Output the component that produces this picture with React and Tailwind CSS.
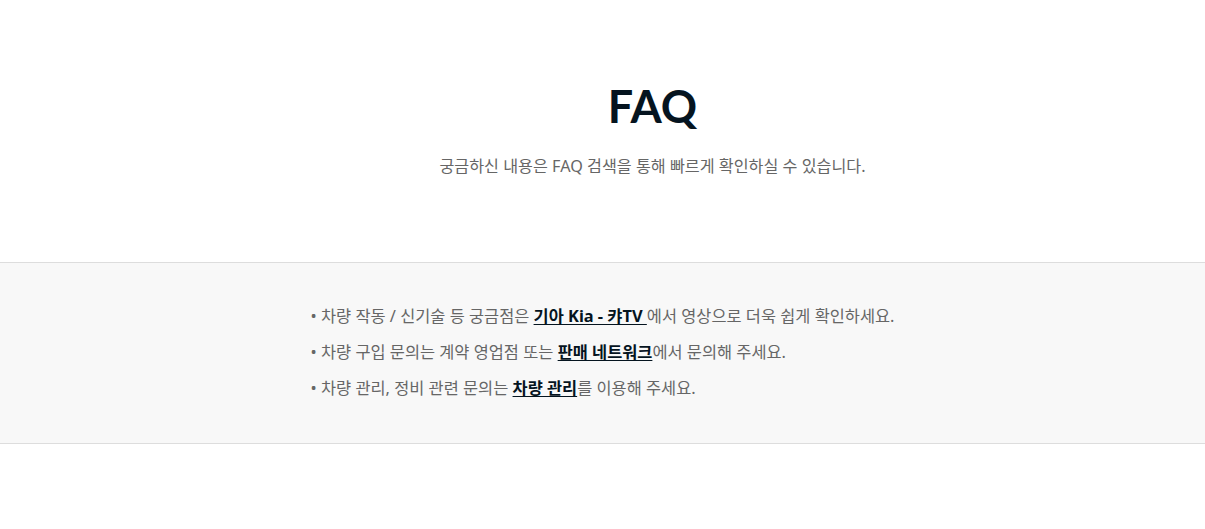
export default function App() {
  const font = { fontFamily: '"Noto Sans", "Noto Sans CJK KR", sans-serif' };
  return (
    <div className="min-h-[529px] bg-white" style={font}>
      <div className="pl-[100px] pt-[78px] pb-[84px] text-center">
        <h1
          className="text-[45px] leading-[56px] font-bold text-[#05141f]"
          style={{ fontFamily: 'Lato, "Noto Sans", sans-serif' }}
        >
          FAQ
        </h1>
        <p className="mt-[20px] text-[16.2px] leading-[24px] text-[#666]">
          궁금하신 내용은 FAQ 검색을 통해 빠르게 확인하실 수 있습니다.
        </p>
      </div>
      <div className="border-y border-[#dddddd] bg-[#f8f8f8] pt-[35px] pb-[37px] flex justify-center">
        <ul className="text-[16.4px] leading-[36px] text-[#666]">
          <li>
            • 차량 작동 / 신기술 등 궁금점은{" "}
            <a className="font-bold text-[#05141f] underline underline-offset-2">기아 Kia - 캬TV </a>
            에서 영상으로 더욱 쉽게 확인하세요.
          </li>
          <li>
            • 차량 구입 문의는 계약 영업점 또는{" "}
            <a className="font-bold text-[#05141f] underline underline-offset-2">판매 네트워크</a>
            에서 문의해 주세요.
          </li>
          <li>
            • 차량 관리, 정비 관련 문의는{" "}
            <a className="font-bold text-[#05141f] underline underline-offset-2">차량 관리</a>
            를 이용해 주세요.
          </li>
        </ul>
      </div>
    </div>
  );
}
